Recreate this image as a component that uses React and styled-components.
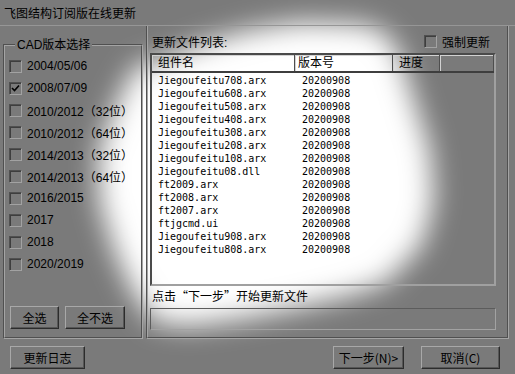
import React from 'react';
import styled, { createGlobalStyle } from 'styled-components';

const Global = createGlobalStyle`
  html, body { margin: 0; padding: 0; background: #7a7a7a; }
  body {
    font-family: "Liberation Sans", "Noto Sans CJK SC", sans-serif;
    font-size: 12px;
    color: #000;
  }
  * { box-sizing: border-box; }
`;

const glowPoints = [
  [160, 60], [200, 44], [250, 30], [300, 22], [360, 24], [385, 32], [400, 55],
  [414, 100], [430, 150], [434, 200], [422, 245], [404, 264], [386, 283],
  [350, 295], [300, 307], [240, 319], [190, 326], [155, 322], [133, 292],
  [114, 250], [99, 200], [99, 150], [118, 100], [136, 66],
].map(([x, y]) => `${x}px ${y}px`).join(', ');

const Window = styled.div`
  position: relative;
  width: 515px;
  height: 374px;
  overflow: hidden;
  background: #7a7a7a;
`;

const Glow = styled.div`
  position: absolute;
  inset: 0;
  filter: blur(14px);
  pointer-events: none;
  z-index: 0;
  &::before {
    content: '';
    position: absolute;
    inset: 0;
    background: #fff;
    clip-path: polygon(${glowPoints});
  }
`;

const Layer = styled.div`
  position: relative;
  z-index: 1;
  display: flex;
  flex-direction: column;
  height: 100%;
`;

const TitleBar = styled.div`
  height: 26px;
  display: flex;
  align-items: center;
  padding-left: 4px;
  font-family: "Noto Sans CJK SC", sans-serif;
  font-size: 12px;
  border-bottom: 1px solid #969696;
`;

const Main = styled.div`
  display: flex;
  gap: 3px;
  padding: 0 6px 0 3px;
  height: 313px;
`;

const GroupBox = styled.fieldset`
  width: 140px;
  height: 302px;
  margin: 11px 0 0 0;
  padding: 2px 4px 8px 4px;
  border: 2px groove #a4a4a4;
  display: flex;
  flex-direction: column;
  min-width: 0;
`;

const Legend = styled.legend`
  margin-left: 6px;
  padding: 0 2px;
  line-height: 16px;
  font-size: 12px;
`;

const CheckRow = styled.label`
  display: flex;
  align-items: center;
  gap: 5px;
  height: ${p => p.$h || 22}px;
  white-space: nowrap;
`;

const Box = styled.span`
  width: 13px;
  height: 13px;
  flex: none;
  border: 1px solid;
  border-color: #505050 #a2a2a2 #a2a2a2 #505050;
  box-shadow: inset 1px 1px 0 #3e3e3e;
  display: flex;
  align-items: center;
  justify-content: center;
`;

const ButtonRow = styled.div`
  margin-top: auto;
  display: flex;
  gap: 6px;
  padding-left: 1px;
`;

const Button = styled.div`
  width: ${p => p.$w}px;
  height: 23px;
  display: flex;
  align-items: center;
  justify-content: center;
  border: 1px solid;
  border-color: #a8a8a8 #2c2c2c #2c2c2c #a8a8a8;
  box-shadow: inset -1px -1px 0 #565656;
  font-family: ${p => (p.$mono ? '"Noto Sans CJK SC", "Liberation Mono", monospace' : '"Liberation Sans", "Noto Sans CJK SC", sans-serif')};
  font-size: 12px;
  white-space: nowrap;
`;

const Panel = styled.div`
  flex: 1;
  display: flex;
  flex-direction: column;
  border: 2px groove #a4a4a4;
  border-top: none;
  padding: 0 11px 0 2px;
`;

const TopRow = styled.div`
  height: 20px;
  margin: 5px 0 2px;
  display: flex;
  align-items: center;
  justify-content: space-between;
  padding: 0 6px 0 2px;
`;

const ListBox = styled.div`
  height: 233px;
  border: 2px solid;
  border-color: #4a4a4a #a0a0a0 #a0a0a0 #4a4a4a;
  display: flex;
  flex-direction: column;
`;

const Header = styled.div`
  display: flex;
  height: 18px;
  border-bottom: 2px solid #3e3e3e;
`;

const HeaderCell = styled.div`
  width: ${p => (p.$w ? `${p.$w}px` : 'auto')};
  flex: ${p => (p.$w ? 'none' : '1')};
  height: 16px;
  padding-left: ${p => p.$pad}px;
  border-right: 1px solid #4e4e4e;
  box-shadow: inset 1px 1px 0 #d2d2d2;
  line-height: 16px;
  font-size: 12px;
`;

const Rows = styled.div`
  padding-top: 1px;
`;

const Row = styled.div`
  display: flex;
  height: 13px;
  line-height: 13px;
  font-family: "DejaVu Sans Mono", "Liberation Mono", monospace;
  font-size: 10px;
`;

const Cell = styled.div`
  width: ${p => p.$w}px;
  padding-left: ${p => p.$pad}px;
  white-space: nowrap;
`;

const Hint = styled.div`
  margin-top: 3px;
  line-height: 14px;
  padding-left: 2px;
  font-family: "Noto Sans CJK SC", sans-serif;
  font-size: 12px;
`;

const Progress = styled.div`
  margin-top: 5px;
  height: 22px;
  border: 1px solid;
  border-color: #5c5c5c #a2a2a2 #a2a2a2 #5c5c5c;
`;

const BottomBar = styled.div`
  flex: 1;
  display: flex;
  align-items: flex-start;
  padding: 7px 15px 0 10px;
`;

const Spacer = styled.div`
  flex: 1;
`;

const Gap = styled.div`
  width: ${p => p.$w}px;
`;

const Check = () => (
  <svg width="9" height="9" viewBox="0 0 9 9">
    <path d="M1 4 L3.5 6.5 L8 1.5" stroke="#000" strokeWidth="1.6" fill="none" />
  </svg>
);

const versions = [
  ['2004/05/06', false],
  ['2008/07/09', true],
  ['2010/2012（32位）', false],
  ['2010/2012（64位）', false],
  ['2014/2013（32位）', false],
  ['2014/2013（64位）', false],
  ['2016/2015', false],
  ['2017', false],
  ['2018', false],
  ['2020/2019', false],
];

const files = [
  'Jiegoufeitu708.arx',
  'Jiegoufeitu608.arx',
  'Jiegoufeitu508.arx',
  'Jiegoufeitu408.arx',
  'Jiegoufeitu308.arx',
  'Jiegoufeitu208.arx',
  'Jiegoufeitu108.arx',
  'Jiegoufeitu08.dll',
  'ft2009.arx',
  'ft2008.arx',
  'ft2007.arx',
  'ftjgcmd.ui',
  'Jiegoufeitu908.arx',
  'Jiegoufeitu808.arx',
];

export default function App() {
  return (
    <>
      <Global />
      <Window>
        <Glow />
        <Layer>
          <TitleBar>飞图结构订阅版在线更新</TitleBar>
          <Main>
            <GroupBox>
              <Legend>CAD版本选择</Legend>
              {versions.map(([v, on]) => (
                <CheckRow key={v}>
                  <Box>{on && <Check />}</Box>
                  <span>{v}</span>
                </CheckRow>
              ))}
              <ButtonRow>
                <Button $w={49}>全选</Button>
                <Button $w={60}>全不选</Button>
              </ButtonRow>
            </GroupBox>
            <Panel>
              <TopRow>
                <span>更新文件列表:</span>
                <CheckRow $h={20}>
                  <Box />
                  <span>强制更新</span>
                </CheckRow>
              </TopRow>
              <ListBox>
                <Header>
                  <HeaderCell $w={143} $pad={6}>组件名</HeaderCell>
                  <HeaderCell $w={98} $pad={3}>版本号</HeaderCell>
                  <HeaderCell $w={47} $pad={6}>进度</HeaderCell>
                  <HeaderCell $pad={0} />
                </Header>
                <Rows>
                  {files.map(f => (
                    <Row key={f}>
                      <Cell $w={143} $pad={6}>{f}</Cell>
                      <Cell $w={98} $pad={7}>20200908</Cell>
                    </Row>
                  ))}
                </Rows>
              </ListBox>
              <Hint>点击“下一步”开始更新文件</Hint>
              <Progress />
            </Panel>
          </Main>
          <BottomBar>
            <Button $w={75}>更新日志</Button>
            <Spacer />
            <Button $w={71} $mono>下一步(N)&gt;</Button>
            <Gap $w={17} />
            <Button $w={79} $mono>取消(C)</Button>
          </BottomBar>
        </Layer>
      </Window>
    </>
  );
}
